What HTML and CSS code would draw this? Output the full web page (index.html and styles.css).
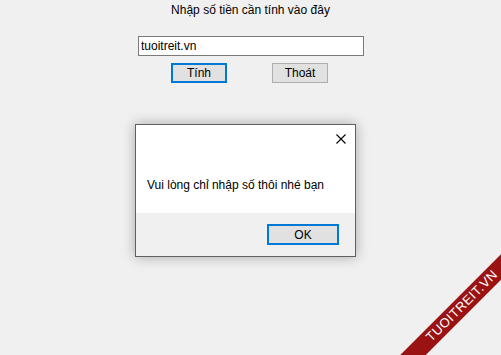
FILE: index.html
```html
<!DOCTYPE html>
<html lang="vi">
    <head>
        <meta charset="UTF-8" />
        <meta name="viewport" content="width=device-width, initial-scale=1.0" />
        <title>Tính tiền</title>
        <link rel="stylesheet" href="styles.css">
    </head>
    <body>
        <form class="form">
            <p class="title">Nhập số tiền cần tính vào đây</p>
            <input class="amount" type="text" value="tuoitreit.vn" />
            <div class="actions">
                <button type="button" class="btn btn-focus">Tính</button>
                <button type="button" class="btn">Thoát</button>
            </div>
        </form>

        <div class="dialog">
            <div class="dialog-body">
                <div class="dialog-head">
                    <svg class="close" width="10" height="10" viewBox="0 0 10 10">
                        <path d="M0.5 0.5 L9.5 9.5 M9.5 0.5 L0.5 9.5" stroke="#000" stroke-width="1.1" fill="none" />
                    </svg>
                </div>
                <p class="message">Vui lòng chỉ nhập số thôi nhé bạn</p>
            </div>
            <div class="dialog-foot">
                <button type="button" class="btn btn-focus btn-ok">OK</button>
            </div>
        </div>

        <div class="watermark">
            <div class="ribbon">TUOITREIT.VN</div>
        </div>
    </body>
</html>
```

FILE: styles.css
```css
html,
body {
    margin: 0;
    height: 100%;
    overflow: hidden;
}
body {
    background-color: #f0f0f0;
    font-family: "Liberation Sans", Arial, sans-serif;
    font-size: 12px;
    color: #000;
    position: relative;
}
.form {
    width: 227px;
    margin: 0 auto;
    padding-top: 3px;
    display: flex;
    flex-direction: column;
    align-items: center;
}
.title {
    margin: 0;
    line-height: 15px;
    height: 15px;
}
.amount {
    margin-top: 18px;
    margin-left: 1px;
    width: 226px;
    height: 20px;
    box-sizing: border-box;
    border: 1px solid #7a7a7a;
    background-color: #fff;
    padding: 0 2px;
    font-family: inherit;
    font-size: 12px;
    color: #000;
    outline: none;
}
.actions {
    margin-top: 7px;
    padding-right: 2px;
    display: flex;
    gap: 45px;
}
.btn {
    width: 56px;
    height: 20px;
    box-sizing: border-box;
    border: 1px solid #adadad;
    background-color: #e1e1e1;
    font-family: inherit;
    font-size: 12px;
    color: #000;
    padding: 0;
    border-radius: 0;
}
.btn-focus {
    border: 2px solid #0078d7;
}

/* message box */
.dialog {
    position: absolute;
    left: 135px;
    top: 124px;
    width: 221px;
    height: 133px;
    box-sizing: border-box;
    border: 1px solid #606060;
    box-shadow: 0 0 12px rgba(0, 0, 0, 0.3);
    display: flex;
    flex-direction: column;
    background-color: #f0f0f0;
}
.dialog-body {
    flex: 1;
    background-color: #fff;
}
.dialog-head {
    height: 28px;
    display: flex;
    justify-content: flex-end;
    align-items: center;
    padding-right: 9px;
}
.message {
    margin: 24px 0 0 11px;
    line-height: 16px;
}
.dialog-foot {
    height: 43px;
    display: flex;
    justify-content: flex-end;
    align-items: flex-start;
    padding: 11px 16px 0 0;
    box-sizing: border-box;
}
.btn-ok {
    width: 72px;
    height: 21px;
}

/* watermark */
.watermark {
    position: absolute;
    right: 0;
    bottom: 0;
    width: 140px;
    height: 140px;
    overflow: hidden;
}
.ribbon {
    position: absolute;
    left: 1px;
    top: 82px;
    width: 200px;
    height: 18px;
    line-height: 18px;
    transform: rotate(-45deg);
    background-color: #9a1212;
    color: #fff;
    text-align: center;
    font-size: 13px;
    letter-spacing: 0.5px;
}
```
